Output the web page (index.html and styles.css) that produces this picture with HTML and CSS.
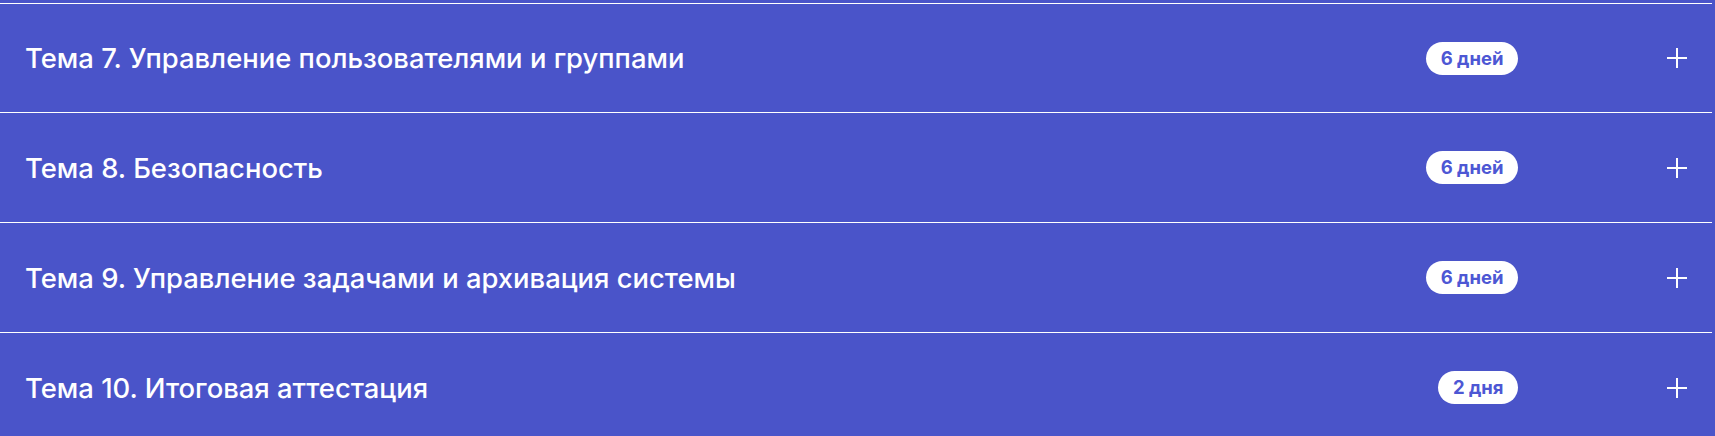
FILE: index.html
```html
<!DOCTYPE html>
<html lang="ru">
<head>
<meta charset="utf-8">
<link rel="stylesheet" href="styles.css">
</head>
<body>
<div class="program">
  <div class="topic">
    <div class="topic-title">Тема 7. Управление пользователями и группами</div>
    <span class="badge">6 дней</span>
    <span class="plus"></span>
  </div>
  <div class="topic">
    <div class="topic-title">Тема 8. Безопасность</div>
    <span class="badge">6 дней</span>
    <span class="plus"></span>
  </div>
  <div class="topic">
    <div class="topic-title">Тема 9. Управление задачами и архивация системы</div>
    <span class="badge">6 дней</span>
    <span class="plus"></span>
  </div>
  <div class="topic">
    <div class="topic-title">Тема 10. Итоговая аттестация</div>
    <span class="badge">2 дня</span>
    <span class="plus"></span>
  </div>
</div>
</body>
</html>
```

FILE: styles.css
```css
html, body {
  margin: 0;
  padding: 0;
  background: #4a54c9;
  height: 100%;
  overflow: hidden;
}

body {
  font-family: Inter, "Noto Sans", sans-serif;
  color: #ffffff;
}

.program {
  padding: 3px 3px 0 0;
}

.topic {
  display: flex;
  align-items: center;
  height: 109px;
  border-top: 1px solid #ffffff;
  padding: 0 25px 0 25px;
}

.topic:first-child {
  height: 108px;
}

.topic-title {
  flex: 1;
  font-size: 27.4px;
  font-weight: 500;
}

.badge {
  background: #ffffff;
  color: #4d57d4;
  font-size: 18.5px;
  font-weight: 700;
  line-height: 33px;
  height: 33px;
  padding: 0 14.5px;
  border-radius: 17px;
  margin-right: 149px;
}

.plus {
  position: relative;
  width: 20px;
  height: 20px;
}

.plus::before,
.plus::after {
  content: "";
  position: absolute;
  background: #ffffff;
}

.plus::before {
  left: 0;
  right: 0;
  top: 9px;
  height: 2px;
}

.plus::after {
  top: 0;
  bottom: 0;
  left: 9px;
  width: 2px;
}
```
